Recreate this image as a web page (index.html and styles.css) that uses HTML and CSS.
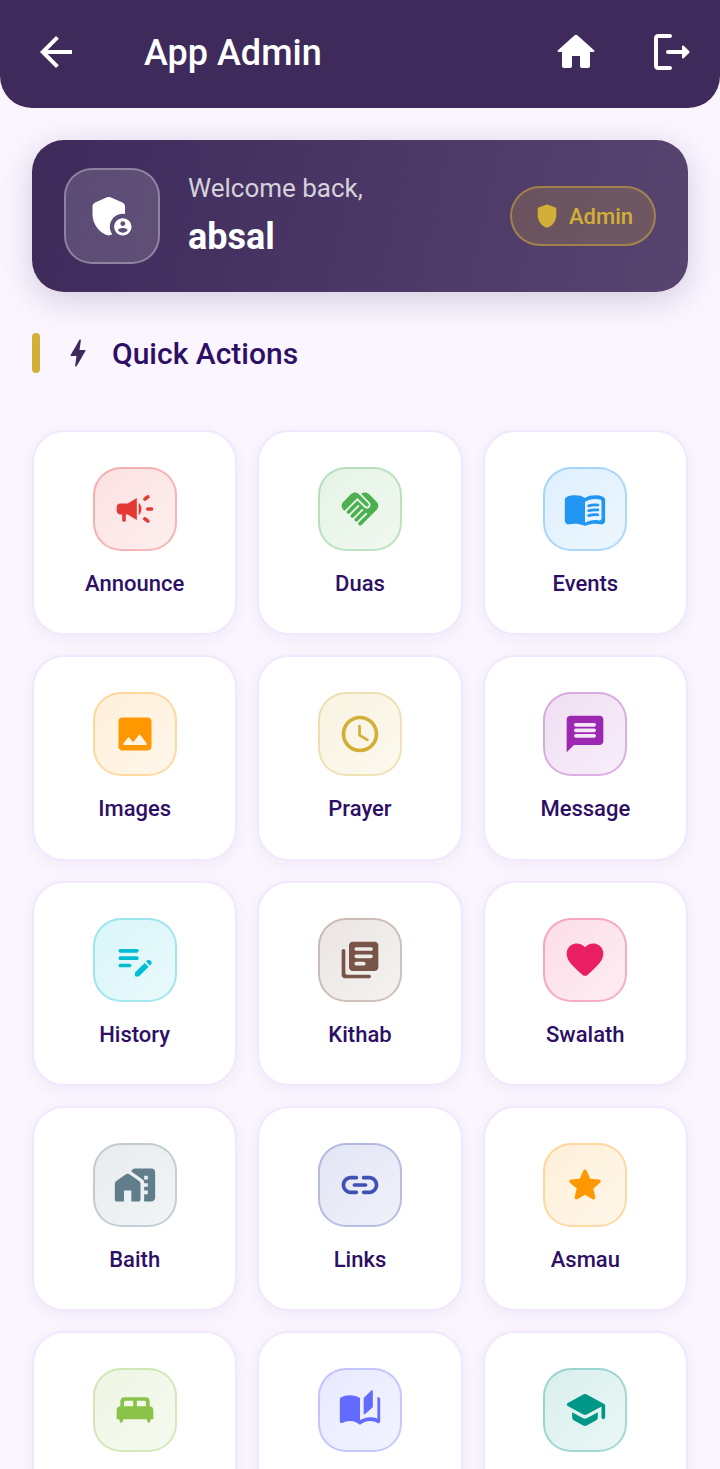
FILE: index.html
```html
<!DOCTYPE html>
<html lang="en">
<head>
<meta charset="utf-8">
<meta name="viewport" content="width=device-width, initial-scale=1">
<title>App Admin</title>
<link rel="stylesheet" href="styles.css">
</head>
<body class="app">
<header class="topbar">
  <button class="icon-button" type="button" aria-label="Back"><svg viewBox="0 0 24 24"><path d="M20 11H7.83l5.59-5.59L12 4l-8 8 8 8 1.41-1.41L7.83 13H20v-2z"/></svg></button>
  <h1 class="topbar-title">App Admin</h1>
  <button class="icon-button" type="button" aria-label="Home"><svg viewBox="0 0 24 24"><path d="M10 19v-5h4v5c0 .55.45 1 1 1h3c.55 0 1-.45 1-1v-7h1.7c.46 0 .68-.57.33-.87L12.67 3.6c-.38-.34-.96-.34-1.34 0l-8.36 7.53c-.34.3-.13.87.33.87H5v7c0 .55.45 1 1 1h3c.55 0 1-.45 1-1z"/></svg></button>
  <button class="icon-button" type="button" aria-label="Log out"><svg viewBox="0 0 24 24"><path d="M5 5h6c.55 0 1-.45 1-1s-.45-1-1-1H5c-1.1 0-2 .9-2 2v14c0 1.1.9 2 2 2h6c.55 0 1-.45 1-1s-.45-1-1-1H5V5z"/><path d="M20.65 11.65l-2.79-2.79c-.32-.32-.86-.1-.86.35V11h-7c-.55 0-1 .45-1 1s.45 1 1 1h7v1.79c0 .45.54.67.85.35l2.79-2.79c.2-.19.2-.51.01-.7z"/></svg></button>
</header>
<main class="content">
  <section class="welcome">
    <div class="avatar"><svg viewBox="0 0 24 24"><path d="M17 11c.34 0 .67.04 1 .09V7.58c0-.8-.47-1.52-1.2-1.83l-5.5-2.4c-.51-.22-1.09-.22-1.6 0l-5.5 2.4C3.47 6.07 3 6.79 3 7.58v3.6c0 4.54 3.2 8.79 7.5 9.82.55-.13 1.08-.32 1.6-.55-.69-.98-1.1-2.17-1.1-3.45 0-3.31 2.69-6 6-6z"/><path d="M17 13c-2.21 0-4 1.79-4 4s1.79 4 4 4 4-1.79 4-4-1.79-4-4-4zm0 1.38c.62 0 1.12.51 1.12 1.12s-.51 1.12-1.12 1.12-1.12-.51-1.12-1.12.5-1.12 1.12-1.12zm0 5.37c-.93 0-1.74-.46-2.24-1.17.05-.72 1.51-1.08 2.24-1.08s2.19.36 2.24 1.08c-.5.71-1.31 1.17-2.24 1.17z"/></svg></div>
    <div class="welcome-text">
      <p class="greeting">Welcome back,</p>
      <p class="user-name">absal</p>
    </div>
    <div class="badge"><svg viewBox="0 0 24 24"><path d="M11.3 2.26l-6 2.25C4.52 4.81 4 5.55 4 6.39v4.71c0 5.05 3.41 9.76 8 10.91 4.59-1.15 8-5.86 8-10.91V6.39c0-.83-.52-1.58-1.3-1.87l-6-2.25c-.45-.18-.95-.18-1.4-.01z"/></svg><span>Admin</span></div>
  </section>
  <div class="section-head">
    <span class="section-bar"></span>
    <svg viewBox="0 0 24 24"><path d="M10.67 21c-.35 0-.62-.31-.57-.66L11 14H7.5c-.88 0-.33-.75-.31-.78 1.26-2.23 3.15-5.53 5.65-9.93.1-.18.3-.29.5-.29.35 0 .62.31.57.66L13.01 10h3.51c.4 0 .62.19.4.66-3.29 5.74-5.2 9.09-5.75 10.05-.1.18-.29.29-.5.29z"/></svg>
    <h2 class="section-title">Quick Actions</h2>
  </div>
  <nav class="grid" aria-label="Quick Actions">
    <button class="card" type="button"><span class="tile red"><svg viewBox="0 0 24 24"><path d="M18 12c0 .55.45 1 1 1h2c.55 0 1-.45 1-1s-.45-1-1-1h-2c-.55 0-1 .45-1 1zM16.59 16.82c-.33.44-.24 1.05.2 1.37.53.39 1.09.81 1.62 1.21.44.33 1.06.24 1.38-.2 0-.01 0-.01.01-.01.33-.44.24-1.06-.2-1.38-.53-.4-1.09-.82-1.61-1.21-.44-.33-1.06-.23-1.39.21zM19.81 4.81c0-.01-.01-.01-.01-.01-.33-.44-.95-.53-1.38-.2-.53.4-1.1.82-1.62 1.22-.44.33-.52.95-.19 1.38 0 .01.01.01.01.01.33.44.94.53 1.38.2.53-.39 1.09-.82 1.62-1.22.43-.32.51-.94.19-1.38zM8 9H4c-1.1 0-2 .9-2 2v2c0 1.1.9 2 2 2h1v3c0 .55.45 1 1 1s1-.45 1-1v-3h1l5 3V6L8 9zM15.5 12c0-1.33-.58-2.53-1.5-3.35v6.69c.92-.81 1.5-2.01 1.5-3.34z"/></svg></span><span class="label">Announce</span></button>
    <button class="card" type="button"><span class="tile green"><svg viewBox="0 0 24 24"><path d="M16.48 10.41c-.39.39-1.04.39-1.43 0l-4.47-4.46-7.05 7.04-.66-.63c-1.17-1.17-1.17-3.07 0-4.24l4.24-4.24c1.17-1.17 3.07-1.17 4.24 0L16.48 9c.39.39.39 1.02 0 1.41zM17.18 8.29c.78.78.78 2.05 0 2.83-1.27 1.27-2.61.22-2.83 0l-3.76-3.76-5.57 5.57c-.39.39-.39 1.02 0 1.41.39.39 1.02.39 1.42 0l4.62-4.62.71.71-4.62 4.62c-.39.39-.39 1.02 0 1.41.39.39 1.02.39 1.42 0l4.62-4.62.71.71-4.62 4.62c-.39.39-.39 1.02 0 1.41.39.39 1.02.39 1.41 0l4.62-4.62.71.71-4.62 4.62c-.39.39-.39 1.02 0 1.41.39.39 1.02.39 1.41 0l8.32-8.34c1.17-1.17 1.17-3.07 0-4.24l-4.24-4.24c-1.15-1.15-3.01-1.17-4.18-.06l4.47 4.47z"/></svg></span><span class="label">Duas</span></button>
    <button class="card" type="button"><span class="tile blue"><svg viewBox="0 0 24 24"><path d="M17.5 4.5c-1.95 0-4.05.4-5.5 1.5-1.45-1.1-3.55-1.5-5.5-1.5-1.45 0-2.99.22-4.28.79C1.49 5.62 1 6.33 1 7.14v11.28c0 1.3 1.22 2.26 2.48 1.94.98-.25 2.02-.36 3.02-.36 1.56 0 3.22.26 4.56.92.6.3 1.28.3 1.87 0 1.34-.67 3-.92 4.56-.92 1 0 2.04.11 3.02.36 1.26.33 2.48-.63 2.48-1.94V7.14c0-.81-.49-1.52-1.22-1.85-1.28-.57-2.82-.79-4.27-.79zM21 17.23c0 .63-.58 1.09-1.2.98-.75-.14-1.53-.2-2.3-.2-1.7 0-4.15.65-5.5 1.5V8c1.35-.85 3.8-1.5 5.5-1.5.92 0 1.83.09 2.7.28.46.1.8.51.8.98v9.47z"/><path d="M13.98 11.01c-.32 0-.61-.2-.71-.52-.13-.39.09-.82.48-.94 1.54-.5 3.53-.66 5.36-.45.41.05.71.42.66.83-.05.41-.42.71-.83.66-1.62-.19-3.39-.04-4.73.39-.08.01-.16.03-.23.03zM13.98 13.67c-.32 0-.61-.2-.71-.52-.13-.39.09-.82.48-.94 1.53-.5 3.53-.66 5.36-.45.41.05.71.42.66.83-.05.41-.42.71-.83.66-1.62-.19-3.39-.04-4.73.39-.08.02-.16.03-.23.03zM13.98 16.33c-.32 0-.61-.2-.71-.52-.13-.39.09-.82.48-.94 1.53-.5 3.53-.66 5.36-.45.41.05.71.42.66.83-.05.41-.42.7-.83.66-1.62-.19-3.39-.04-4.73.39-.08.02-.16.03-.23.03z"/></svg></span><span class="label">Events</span></button>
    <button class="card" type="button"><span class="tile orange"><svg viewBox="0 0 24 24"><path d="M21 19V5c0-1.1-.9-2-2-2H5c-1.1 0-2 .9-2 2v14c0 1.1.9 2 2 2h14c1.1 0 2-.9 2-2zM8.9 13.98l2.1 2.53 3.1-3.99c.2-.26.6-.26.8.01l3.51 4.68c.25.33.01.8-.4.8H6.02c-.42 0-.65-.48-.39-.81L8.12 14c.19-.26.57-.27.78-.02z"/></svg></span><span class="label">Images</span></button>
    <button class="card" type="button"><span class="tile gold"><svg viewBox="0 0 24 24"><path d="M11.99 2C6.47 2 2 6.48 2 12s4.47 10 9.99 10C17.52 22 22 17.52 22 12S17.52 2 11.99 2zM12 20c-4.42 0-8-3.58-8-8s3.58-8 8-8 8 3.58 8 8-3.58 8-8 8zm-.22-13h-.06c-.4 0-.72.32-.72.72v4.72c0 .35.18.68.49.86l4.15 2.49c.34.2.78.1.98-.24.21-.34.1-.79-.25-.99l-3.87-2.3V7.72c0-.4-.32-.72-.72-.72z"/></svg></span><span class="label">Prayer</span></button>
    <button class="card" type="button"><span class="tile purple"><svg viewBox="0 0 24 24"><path d="M20 2H4.01c-1.1 0-2 .9-2 2L2 22l4-4h14c1.1 0 2-.9 2-2V4c0-1.1-.9-2-2-2zm-3 12H7c-.55 0-1-.45-1-1s.45-1 1-1h10c.55 0 1 .45 1 1s-.45 1-1 1zm0-3H7c-.55 0-1-.45-1-1s.45-1 1-1h10c.55 0 1 .45 1 1s-.45 1-1 1zm0-3H7c-.55 0-1-.45-1-1s.45-1 1-1h10c.55 0 1 .45 1 1s-.45 1-1 1z"/></svg></span><span class="label">Message</span></button>
    <button class="card" type="button"><span class="tile cyan"><svg viewBox="0 0 24 24"><path d="M14 11c0 .55-.45 1-1 1H4c-.55 0-1-.45-1-1s.45-1 1-1h9c.55 0 1 .45 1 1zM3 7c0 .55.45 1 1 1h9c.55 0 1-.45 1-1s-.45-1-1-1H4c-.55 0-1 .45-1 1zm7 8c0-.55-.45-1-1-1H4c-.55 0-1 .45-1 1s.45 1 1 1h5c.55 0 1-.45 1-1zm8.01-2.13l.71-.71c.39-.39 1.02-.39 1.41 0l.71.71c.39.39.39 1.02 0 1.41l-.71.71-2.12-2.12zm-.71.71l-5.16 5.16c-.09.09-.14.21-.14.35v1.41c0 .28.22.5.5.5h1.41c.13 0 .26-.05.35-.15l5.16-5.16-2.12-2.11z"/></svg></span><span class="label">History</span></button>
    <button class="card" type="button"><span class="tile brown"><svg viewBox="0 0 24 24"><path d="M3 6c-.55 0-1 .45-1 1v13c0 1.1.9 2 2 2h13c.55 0 1-.45 1-1s-.45-1-1-1H5c-.55 0-1-.45-1-1V7c0-.55-.45-1-1-1zm17-4H8c-1.1 0-2 .9-2 2v12c0 1.1.9 2 2 2h12c1.1 0 2-.9 2-2V4c0-1.1-.9-2-2-2zm-2 9h-8c-.55 0-1-.45-1-1s.45-1 1-1h8c.55 0 1 .45 1 1s-.45 1-1 1zm-4 4h-4c-.55 0-1-.45-1-1s.45-1 1-1h4c.55 0 1 .45 1 1s-.45 1-1 1zm4-8h-8c-.55 0-1-.45-1-1s.45-1 1-1h8c.55 0 1 .45 1 1s-.45 1-1 1z"/></svg></span><span class="label">Kithab</span></button>
    <button class="card" type="button"><span class="tile pink"><svg viewBox="0 0 24 24"><path d="M13.35 20.13c-.76.69-1.93.69-2.69-.01l-.11-.1C5.3 15.27 1.87 12.16 2 8.28c.06-1.7.93-3.33 2.34-4.29 2.64-1.8 5.9-.96 7.66 1.1 1.76-2.06 5.02-2.91 7.66-1.1 1.41.96 2.28 2.59 2.34 4.29.14 3.88-3.3 6.99-8.55 11.76l-.1.09z"/></svg></span><span class="label">Swalath</span></button>
    <button class="card" type="button"><span class="tile slate"><svg viewBox="0 0 24 24"><path d="M1 11.47V20c0 .55.45 1 1 1h4v-6h4v6h4c.55 0 1-.45 1-1v-8.53c0-.65-.31-1.25-.84-1.63l-5-3.57c-.69-.5-1.63-.5-2.32 0l-5 3.57C1.31 10.22 1 10.82 1 11.47z"/><path fill-rule="evenodd" d="M21 3h-9.01C11 3 10.16 3.73 10.02 4.68L16.16 9.06C16.69 9.44 17 10.04 17 10.69V11h2v2h-2v2h2v2h-2v4h4c1.1 0 2-.9 2-2V5c0-1.1-.9-2-2-2zM19 9h-2V7h2v2z"/></svg></span><span class="label">Baith</span></button>
    <button class="card" type="button"><span class="tile indigo"><svg viewBox="0 0 24 24"><path d="M17 7h-3c-.55 0-1 .45-1 1s.45 1 1 1h3c1.65 0 3 1.35 3 3s-1.35 3-3 3h-3c-.55 0-1 .45-1 1s.45 1 1 1h3c2.76 0 5-2.24 5-5s-2.24-5-5-5zm-9 5c0 .55.45 1 1 1h6c.55 0 1-.45 1-1s-.45-1-1-1H9c-.55 0-1 .45-1 1zm2 3H7c-1.65 0-3-1.35-3-3s1.35-3 3-3h3c.55 0 1-.45 1-1s-.45-1-1-1H7c-2.76 0-5 2.24-5 5s2.24 5 5 5h3c.55 0 1-.45 1-1s-.45-1-1-1z"/></svg></span><span class="label">Links</span></button>
    <button class="card" type="button"><span class="tile orange"><svg viewBox="0 0 24 24"><path d="M12 17.27l4.15 2.51c.76.46 1.69-.22 1.49-1.08l-1.1-4.72 3.67-3.18c.67-.58.31-1.68-.57-1.75l-4.83-.41-1.89-4.46c-.34-.81-1.5-.81-1.84 0L9.19 8.63l-4.83.41c-.88.07-1.24 1.17-.57 1.75l3.67 3.18-1.1 4.72c-.2.86.73 1.54 1.49 1.08l4.15-2.5z"/></svg></span><span class="label">Asmau</span></button>
    <button class="card" type="button" aria-label="Rooms"><span class="tile lime"><svg viewBox="0 0 24 24"><path d="M22 12c0-1.1-.9-2-2-2V7c0-1.1-.9-2-2-2H6c-1.1 0-2 .9-2 2v3c-1.1 0-2 .9-2 2v5h1.33l.51 1.53c.1.28.36.47.66.47s.56-.19.66-.47L5.67 17h12.67l.51 1.53c.1.28.36.47.66.47s.56-.19.66-.47L20.67 17H22v-5zm-11-2H6V8c0-.55.45-1 1-1h4v3zm7 0h-5V7h4c.55 0 1 .45 1 1v2z"/></svg></span></button>
    <button class="card" type="button" aria-label="Stories"><span class="tile iris"><svg viewBox="0 0 24 24"><path d="M22.47 5.2c-.29-.14-.5-.29-.97-.45v12.03c-1.2-.5-2.6-.78-4-.78-1.9 0-3.78.54-5.5 1.58V5.48C10.38 4.55 8.51 4 6.5 4c-1.79 0-3.48.44-4.97 1.2-.33.16-.53.51-.53.88v12.08c0 .58.47.99 1 .99.16 0 .32-.04.48-.12C3.69 18.4 5.05 18 6.5 18c2.07 0 3.98.82 5.5 2 1.52-1.18 3.43-2 5.5-2 1.45 0 2.81.4 4.02 1.04.16.08.32.12.48.12.52 0 1-.41 1-.99V6.08c0-.37-.2-.72-.53-.88z"/><path d="M18.15 1.35l-4 4c-.1.1-.15.22-.15.35v8.17c0 .44.52.66.83.37l4-3.6c.11-.1.17-.23.17-.37V1.7c0-.44-.54-.67-.85-.35z"/></svg></span></button>
    <button class="card" type="button" aria-label="Study"><span class="tile teal"><svg viewBox="0 0 24 24"><path d="M5 13.18v2.81c0 .73.4 1.41 1.04 1.76l5 2.73c.6.33 1.32.33 1.92 0l5-2.73c.64-.35 1.04-1.03 1.04-1.76v-2.81l-6.04 3.3c-.6.33-1.32.33-1.92 0L5 13.18zm6.04-9.66l-8.43 4.6c-.69.38-.69 1.38 0 1.76l8.43 4.6c.6.33 1.32.33 1.92 0L21 10.09V16c0 .55.45 1 1 1s1-.45 1-1V9.59c0-.37-.2-.7-.52-.88l-9.52-5.19c-.6-.32-1.32-.32-1.92 0z"/></svg></span></button>
  </nav>
</main>
</body>
</html>
```
FILE: styles.css
```css
* {
  box-sizing: border-box;
}

.app {
  margin: 0;
  height: 100vh;
  display: flex;
  flex-direction: column;
  overflow: hidden;
  background: #faf5ff;
  color: #2d1065;
  font-family: Roboto, "Liberation Sans", sans-serif;
}

h1, h2, p {
  margin: 0;
}

svg {
  display: block;
  flex: none;
  fill: currentColor;
}

button {
  border: 0;
  padding: 0;
  background: none;
  color: inherit;
  font: inherit;
  cursor: pointer;
}

.topbar {
  flex: none;
  display: flex;
  align-items: center;
  gap: 48px;
  padding: 28px 24px 32px 32px;
  border-radius: 0 0 32px 32px;
  background: #3e2a5b;
  color: #fff;
}

.topbar-title {
  flex: 1;
  padding: 2px 0 0 16px;
  font-size: 36px;
  line-height: 46px;
  font-weight: 500;
}

.icon-button svg {
  width: 48px;
  height: 48px;
}

.content {
  flex: 1;
  min-height: 0;
  padding: 32px;
  overflow-y: auto;
  scrollbar-width: none;
}

.welcome {
  display: flex;
  align-items: center;
  gap: 28px;
  padding: 28px 32px;
  border-radius: 32px;
  background: linear-gradient(103deg, #3e2a5b, #57446f);
  box-shadow: 0 8px 32px rgba(62, 42, 91, 0.2);
  color: #fff;
}

.avatar {
  flex: none;
  display: grid;
  place-items: center;
  width: 96px;
  height: 96px;
  border: 2px solid rgba(255, 255, 255, 0.3);
  border-radius: 28px;
  background: rgba(255, 255, 255, 0.15);
}

.avatar svg {
  width: 52px;
  height: 52px;
}

.welcome-text {
  flex: 1;
}

.greeting {
  font-size: 26px;
  line-height: 32px;
  color: rgba(255, 255, 255, 0.78);
}

.user-name {
  padding-top: 10px;
  font-size: 36px;
  line-height: 46px;
  font-weight: 700;
}

.badge {
  display: flex;
  align-items: center;
  gap: 8px;
  height: 60px;
  padding: 0 21px;
  border: 2px solid rgba(212, 175, 55, 0.5);
  border-radius: 30px;
  background: rgba(212, 175, 55, 0.2);
  color: #d4af37;
  font-size: 22px;
  font-weight: 500;
}

.badge svg {
  width: 28px;
  height: 28px;
}

.section-head {
  display: flex;
  align-items: center;
  padding: 41px 0 57px;
}

.section-bar {
  width: 8px;
  height: 40px;
  border-radius: 4px;
  background: #d4af37;
}

.section-head svg {
  width: 36px;
  height: 36px;
  margin: 0 16px 0 20px;
  color: #3e2a5b;
}

.section-title {
  padding-top: 2px;
  font-size: 30px;
  line-height: 38px;
  font-weight: 500;
}

.grid {
  display: grid;
  grid-template-columns: repeat(3, 1fr);
  gap: 20px;
}

.card {
  display: flex;
  flex-direction: column;
  align-items: center;
  gap: 20px;
  aspect-ratio: 1;
  padding-top: 35px;
  border: 2px solid #f1e8fd;
  border-radius: 32px;
  background: #fff;
  box-shadow: 0 4px 16px rgba(62, 42, 91, 0.05);
}

.tile {
  display: grid;
  place-items: center;
  width: 84px;
  height: 84px;
  border: 2px solid color-mix(in srgb, currentColor 30%, transparent);
  border-radius: 28px;
  background: linear-gradient(135deg, color-mix(in srgb, currentColor 15%, transparent), color-mix(in srgb, currentColor 8%, transparent)) border-box;
}

.tile svg {
  width: 44px;
  height: 44px;
}

.label {
  font-size: 22px;
  line-height: 26px;
  font-weight: 500;
}

.red { color: #e53935; }
.green { color: #4caf50; }
.blue { color: #2196f3; }
.orange { color: #ff9800; }
.gold { color: #d4af37; }
.purple { color: #9c27b0; }
.cyan { color: #00bcd4; }
.brown { color: #795548; }
.pink { color: #e91e63; }
.slate { color: #607d8b; }
.indigo { color: #3f51b5; }
.lime { color: #8bc34a; }
.iris { color: #636bff; }
.teal { color: #009688; }
```
